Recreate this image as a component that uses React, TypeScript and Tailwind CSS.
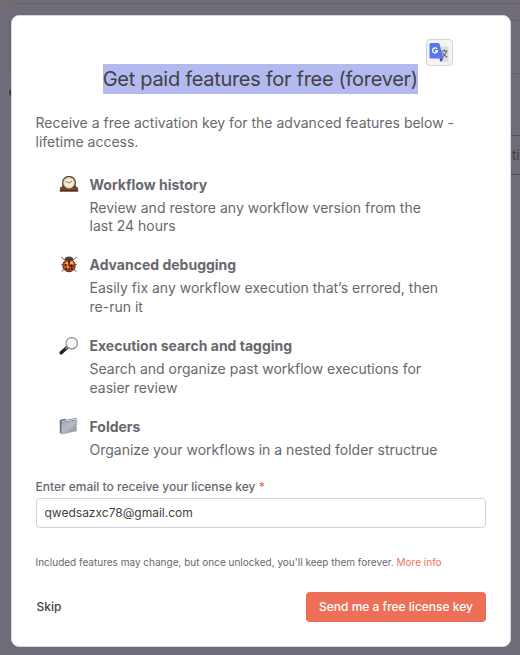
import type { ReactNode } from 'react';

function Clock() {
  return (
    <svg width="20" height="18" viewBox="0 0 20 18">
      <path d="M1 15V11.500C3 11 3.600 9.500 4 6h12c.4 3.500 1.200 5 3 5.500V15z" fill="#754631" />
      <path d="M.8 14h18.400v1.700H.8z" fill="#5b2d22" />
      <circle cx="10" cy="6.800" r="6.300" fill="#f5f0d5" stroke="#57483a" strokeWidth="1.400" />
      <circle cx="10" cy="6.800" r="5.100" fill="none" stroke="#d2c79e" strokeWidth=".8" />
      <path d="M6.800 5.300 10 7 13 5" fill="none" stroke="#66645a" strokeWidth=".9" />
    </svg>
  );
}

function Bug() {
  return (
    <svg width="20" height="18" viewBox="0 0 20 18">
      <path d="m2 1 4.500 3.300M18 1l-4.500 3.300M2 8.500h4M14 8.500h4M2.500 15.500l4-3M17.500 15.500l-4-3" stroke="#929296" strokeWidth="1.200" />
      <ellipse cx="10" cy="3.300" rx="4.200" ry="2.700" fill="#4a4848" />
      <ellipse cx="10" cy="9.600" rx="6.300" ry="6.200" fill="#c44b1d" stroke="#55281d" strokeWidth=".9" />
      <path d="M10 5V16" stroke="#35251e" strokeWidth=".9" />
      <path d="M5.800 7.500 9 5v4.800z" fill="#f2b044" />
      <circle cx="12.700" cy="7" r="1.800" fill="#f3b548" />
      <circle cx="9" cy="11" r="1.300" fill="#ec9438" />
      <g fill="#31201c"><circle cx="6.800" cy="9" r="1.100" /><circle cx="12.500" cy="9.900" r="1.400" /><circle cx="7.500" cy="13" r="1" /><circle cx="12.800" cy="13" r="1" /><circle cx="10" cy="5.500" r="1.200" /></g>
    </svg>
  );
}

function Magnifier() {
  return (
    <svg width="20" height="19" viewBox="0 0 20 19">
      <path d="m8 10.500-5.800 5.300" stroke="#26272c" strokeWidth="3.500" strokeLinecap="round" />
      <path d="m8.700 9.800-2.200 2" stroke="#8b8b90" strokeWidth="1.600" />
      <circle cx="12.800" cy="6.300" r="5.700" fill="#f2f4f6" stroke="#98999d" strokeWidth="1.300" />
      <path d="M8.400 6.800A4.500 4.500 0 0 1 12.500 2.300" fill="none" stroke="#fff" strokeWidth="1.200" />
    </svg>
  );
}

function Folder() {
  return (
    <svg width="20" height="18" viewBox="0 0 20 18">
      <defs>
        <linearGradient id="folder" x2="1" y2="1"><stop stopColor="#a0a8b2" /><stop offset=".45" stopColor="#b7bdc6" /><stop offset="1" stopColor="#7c8590" /></linearGradient>
      </defs>
      <path d="m.8 2 5.500-1.200 1 .9L17.500 0v2.500L3 5v11l-2.200-1z" fill="#65707b" />
      <path d="m3 3.500 14.500-2.300" stroke="#e3e6e9" strokeWidth="1" />
      <path d="M2.500 4.800 18 2.500 17.300 13 2.500 16.200z" fill="url(#folder)" stroke="#99a2ac" strokeWidth=".5" />
    </svg>
  );
}

function TranslateBadge() {
  return (
    <div className="absolute left-[414px] top-[23px] flex h-[27px] w-[27px] items-center justify-center rounded-[4px] border border-[#d4d4d4] bg-[#f4f4f4]">
      <svg width="21" height="21" viewBox="0 0 21 21">
        <path d="M8 4.500h11q.5 0 .5.500v14.500q0 .5-.5.500h-8z" fill="#dcdde0" />
        <path d="M10.500 16.500h4l-2.700 3.500z" fill="#3439b5" />
        <path d="M1.500 1h7.700q1 0 1.300 1L14.500 16.500h-13q-1 0-1-1V2q0-1 1-1z" fill="#5876ee" />
        <path d="M12.500 9h6M15.500 7.500V9M17.500 9c-.7 3-2.300 5-4.500 6M13.500 10.500c1 2 2.500 3.700 4.800 4.800" fill="none" stroke="#59636b" strokeWidth="1.100" />
        <path d="M8.100 7A2.500 2.500 0 1 0 8.500 9H6" fill="none" stroke="#fff" strokeWidth="1.300" />
      </svg>
    </div>
  );
}

type Feature = { icon: ReactNode; title: string; lines: string[] };

const features: Feature[] = [
  { icon: <Clock />, title: 'Workflow history', lines: ['Review and restore any workflow version from the', 'last 24 hours'] },
  { icon: <Bug />, title: 'Advanced debugging', lines: ['Easily fix any workflow execution that’s errored, then', 're-run it'] },
  { icon: <Magnifier />, title: 'Execution search and tagging', lines: ['Search and organize past workflow executions for', 'easier review'] },
  { icon: <Folder />, title: 'Folders', lines: ['Organize your workflows in a nested folder structrue'] },
];

export default function App() {
  return (
    <main className="relative h-[655px] w-[520px] overflow-hidden bg-[#6f6b77] px-[11px] pt-[15px] font-['Inter',sans-serif] text-[#68686e]">
      <div className="absolute inset-0">
        <div className="absolute left-[9px] top-0 h-1 w-full rounded-bl border-b border-[#686263]" />
        <div className="absolute left-[9px] top-0 h-1 w-[7px] rounded-bl bg-[#786b65]" />
        <div className="absolute left-[9px] top-[20px] h-[54px] w-[520px] rounded border border-[#65616e]" />
        <div className="absolute left-[9px] top-[88px] h-[9px] w-[9px] rounded-full bg-[#403d46]" />
        <div className="absolute left-[400px] top-[135px] h-10 w-[150px] border-y border-[#514d59]" />
        <div className="absolute left-[512px] top-[146px] text-[13px] leading-[18px] text-[#3f3c44]">ti</div>
      </div>
      <section className="relative flex h-[632px] w-[500px] flex-col rounded-[8px] border border-[#d9d5e8] bg-white pl-[23.5px] pr-6 pt-12">
        <TranslateBadge />
        <h1 className="-ml-px flex h-[30px] w-[315px] self-center whitespace-nowrap bg-[#b4baf0] text-[20px] leading-[30px] tracking-[-0.3px] text-[#414244]">Get paid features for free (forever)</h1>
        <p className="mt-5 whitespace-nowrap text-[14px] leading-[18.75px]">Receive a free activation key for the advanced features below -<br />lifetime access.</p>
        <div className="ml-[23px] mt-[24.2px] flex flex-col gap-[20.25px]">
          {features.map((feature) => (
            <article key={feature.title} className="flex items-start">
              <div className="w-[31px] shrink-0">{feature.icon}</div>
              <div className="whitespace-nowrap text-[14px] leading-[18.75px]">
                <h2 className="font-bold">{feature.title}</h2>
                <p className="mt-[4.25px]">{feature.lines.map((line) => <span key={line} className="block">{line}</span>)}</p>
              </div>
            </article>
          ))}
        </div>
        <label className="mt-[19px] text-[12px] font-medium leading-4" htmlFor="email">Enter email to receive your license key <span className="text-[#ed705a]">*</span></label>
        <input id="email" className="ml-[0.5px] mt-[3px] h-[30px] w-[450px] shrink-0 rounded-[4px] border border-[#d2cfe4] bg-white pl-[7.5px] pr-2 text-[12px] text-[#414244] outline-none" defaultValue="qwedsazxc78@gmail.com" />
        <p className="mt-[26px] whitespace-nowrap text-[10px] leading-4">Included features may change, but once unlocked, you'll keep them forever. <a className="text-[#ed705a]">More info</a></p>
        <footer className="mt-[22px] flex h-[30px] items-center justify-between">
          <button className="pl-px text-[12px] font-medium text-[#414244]">Skip</button>
          <button className="h-[30px] w-[180px] rounded-[4px] bg-[#ed6f57] text-[12px] font-medium text-white">Send me a free license key</button>
        </footer>
      </section>
    </main>
  );
}
